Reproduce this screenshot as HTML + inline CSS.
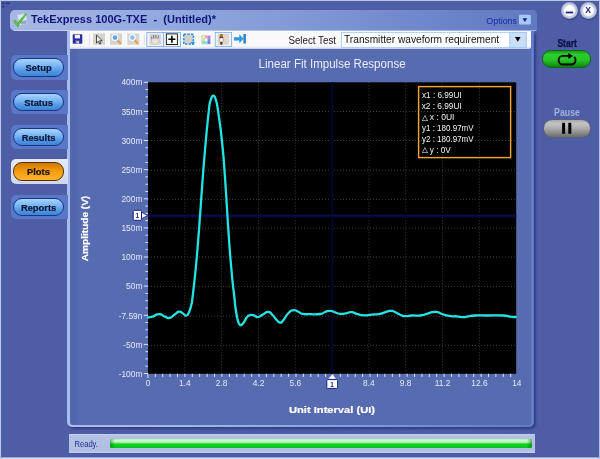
<!DOCTYPE html>
<html>
<head>
<meta charset="utf-8">
<title>TekExpress 100G-TXE - (Untitled)*</title>
<style>
html,body{margin:0;padding:0;}
body{width:600px;height:459px;overflow:hidden;background:#4e5ea6;font-family:"Liberation Sans",sans-serif;position:relative;}
.abs{position:absolute;}
#win{position:absolute;left:0;top:0;width:600px;height:459px;background:#4e5ea6;overflow:hidden;will-change:transform;}
#edgeT{left:0;top:0;width:600px;height:1.1px;background:#bcc5e8;}
#edgeL{left:0;top:0;width:1.3px;height:459px;background:linear-gradient(90deg,#d3d9f1,#a9b3df);}
#edgeR{left:598.5px;top:0;width:1.5px;height:459px;background:linear-gradient(90deg,#8f9bd0,#dfe4f6);}
#edgeB{left:0;top:457.3px;width:600px;height:1.7px;background:linear-gradient(180deg,#6f7dbf 0%,#cfd5ef 55%,#e3e7f7 100%);}
#titlebar{left:10px;top:10px;width:527px;height:21px;border-radius:5px 5px 0 5px;background:linear-gradient(90deg,#a6b8e5 0%,#92a8de 30%,#7d95d4 60%,#6a82c8 85%,#6079c1 100%);}
#titleline{left:14px;top:30px;width:522px;height:1px;background:linear-gradient(90deg,#c9d4f0,#aebfe9 60%,#9fb4e6);}
#toolbar{left:70px;top:31px;width:461px;height:17.6px;background:linear-gradient(180deg,#f9f9fa 0%,#f8f8f9 84%,#dfe4f3 94%,#b9c4e6 100%);border-radius:0 0 2px 0;}
#panel{left:67.4px;top:31px;width:467.1px;height:396px;border-radius:0 0 5px 5px;background:linear-gradient(90deg,#a9bdec 0%,#a3b8ea 25%,#8aa3df 55%,#6a87d0 85%,#607cc6 100%);box-shadow:2px 2px 2.5px #303e86;}
#panelin{left:70px;top:31px;width:461.2px;height:394.1px;border-radius:0 0 3px 3px;background:linear-gradient(90deg,#5367ac 0px,#5367ac 7px,#576bb0 8px,#576bb0 100%);}
#status{left:69.4px;top:434.1px;width:465.6px;height:18.9px;background:linear-gradient(180deg,#c4d1ef 0%,#b3c2e4 10%,#b1c0e2 88%,#c5d1ef 100%);}
#prog{left:110.4px;top:438.8px;width:422px;height:9.7px;border-radius:1.5px;background:linear-gradient(90deg,rgba(0,110,10,0.5) 0px,rgba(0,110,10,0) 5px,rgba(0,110,10,0) 417px,rgba(0,100,10,0.55) 422px),linear-gradient(180deg,#b0f0b0 0%,#cbfacb 14%,#b5f3b5 36%,#5fe26a 47%,#10d428 56%,#0ccc22 80%,#10b824 100%);}
.tab{position:absolute;left:11px;width:57px;height:24.3px;background:#5b77c7;border-radius:5px 0 0 5px;}
.tab.sel{background:linear-gradient(180deg,#e3e9f7 0%,#dbe2f3 50%,#cdd7ef 100%);left:10.8px;width:57.2px;}
.btn{position:absolute;left:2.2px;top:2.9px;width:50.8px;height:18.4px;box-sizing:border-box;border:1px solid #17348a;border-radius:9px;background:linear-gradient(180deg,#a8d4ff 0%,#79b6f4 40%,#4f93e0 75%,#3f84d4 100%);}
.tab.sel .btn{border-color:#5a3000;background:linear-gradient(180deg,#d07800 0%,#f39a0c 45%,#ffb52c 100%);}
.btn span{position:absolute;left:0;right:0;top:0;text-align:center;font-size:9.4px;font-weight:bold;color:#0a1638;line-height:17.5px;-webkit-text-stroke:0.2px #0a1638;}
.tab.sel .btn span{color:#1c0e00;}
.wbtn{position:absolute;width:17px;height:17px;border-radius:50%;background:radial-gradient(circle closest-side at 50% 50%,#ffffff 0%,#ffffff 56%,#d3d9ea 68%,#bcc5dd 82%,#aab4d2 93%,#8b96bd 100%);box-shadow:0.6px 1px 1.2px rgba(30,40,90,0.55);}
#startbtn{left:542.3px;top:49.7px;width:49.1px;height:18.8px;box-sizing:border-box;border:1px solid #0f6a12;border-radius:9.3px;background:linear-gradient(180deg,#1a9a1c 0%,#2ccc2e 22%,#27c629 55%,#179c19 85%,#0f8012 100%);}
#pausebtn{left:542.7px;top:119.2px;width:48.6px;height:18.5px;box-sizing:border-box;border:1px solid #5a5f78;border-radius:9.2px;background:linear-gradient(180deg,#a6a6a6 0%,#c4c4c4 20%,#acacac 50%,#888888 78%,#6c6c6c 100%);}
#ov{left:0;top:0;}
</style>
</head>
<body>
<div id="win">
  <div id="titlebar" class="abs"></div>
  <div id="titleline" class="abs"></div>
  <div id="panel" class="abs"></div>
  <div id="panelin" class="abs"></div>
  <div id="toolbar" class="abs"></div>

  <div class="tab" style="top:55.4px"><div class="btn"><span>Setup</span></div></div>
  <div class="tab" style="top:90.2px"><div class="btn"><span>Status</span></div></div>
  <div class="tab" style="top:125px"><div class="btn"><span>Results</span></div></div>
  <div class="tab sel" style="top:159.3px"><div class="btn"><span>Plots</span></div></div>
  <div class="tab" style="top:194.7px"><div class="btn"><span>Reports</span></div></div>

  <div class="wbtn" style="left:561px;top:2.1px"></div>
  <div class="wbtn" style="left:579.8px;top:2.1px"></div>
  <div id="startbtn" class="abs"></div>
  <div id="pausebtn" class="abs"></div>

  <div id="status" class="abs"></div>
  <div id="prog" class="abs"></div>
  <div id="edgeT" class="abs"></div><div id="edgeL" class="abs"></div><div id="edgeR" class="abs"></div><div id="edgeB" class="abs"></div>

  <svg id="ov" class="abs" width="600" height="459" viewBox="0 0 600 459" font-family="Liberation Sans, sans-serif">
    <!-- grip -->
    <g fill="#2b3784"><rect x="2" y="2.4" width="2.4" height="1.8"/><rect x="5.6" y="2.4" width="4" height="1.8"/><rect x="2" y="5.6" width="2.4" height="1.7"/></g>
    <!-- app icon -->
    <g>
      <path d="M17.2 14.8 L25.6 13.6 L27.6 23.6 L19.4 25.8 Z" fill="#e6ebf6" stroke="#b4bdd6" stroke-width="0.5" opacity="0.9"/>
      <path d="M20.6 21.6 L26.4 20 L27 23.2 L21.4 24.8 Z" fill="#8f9cb2" opacity="0.85"/>
      <path d="M13.1 21.6 L15 19.6 L17.3 22.8 L25.6 13 L27.2 13.8 L17.7 27.2 Z" fill="#46b536"/>
      <path d="M14.4 21.3 L17.4 25.2 L26 14" fill="none" stroke="#9be083" stroke-width="0.6" stroke-linecap="round" opacity="0.8"/>
    </g>
    <text x="31" y="23" font-size="10.3px" font-weight="bold" fill="#0f177a" xml:space="preserve" textLength="185" lengthAdjust="spacingAndGlyphs">TekExpress 100G-TXE  -  (Untitled)*</text>
    <text x="486.3" y="24" font-size="9.2px" fill="#1b2a9c" textLength="30.7" lengthAdjust="spacingAndGlyphs">Options</text>
    <rect x="519" y="14.8" width="11.8" height="9.7" rx="1" fill="#a7c7f7"/>
    <path d="M522.6 18.3 L527.2 18.3 L524.9 22 Z" fill="#0f1a78"/>
    <!-- window buttons -->
    <rect x="565.8" y="11.6" width="7.4" height="1.8" fill="#1a237e"/>
    <text x="588.2" y="13" font-size="8.6px" font-weight="bold" fill="#1a237e" text-anchor="middle">X</text>

    <!-- toolbar icons -->
    <g>
      <!-- save -->
      <rect x="72.7" y="34.3" width="9.6" height="9.4" rx="0.8" fill="#2b2f9d"/>
      <rect x="74.8" y="34.8" width="5.2" height="3.6" fill="#f4f6ff"/>
      <rect x="75.6" y="40.6" width="3.6" height="3.1" fill="#8f95d6"/>
      <rect x="77.6" y="41.1" width="1.2" height="2.2" fill="#f4f6ff"/>
      <rect x="89.2" y="33.6" width="0.8" height="11.4" fill="#d9d9d9"/>
      <!-- pointer -->
      <rect x="93" y="33.5" width="12" height="11.2" fill="#d6d3cc"/>
      <path d="M96.5 35 L96.5 43 L98.4 41.3 L99.8 44 L101 43.4 L99.7 40.8 L102.2 40.6 Z" fill="#f2f2f2" stroke="#222" stroke-width="0.8" stroke-linejoin="round"/>
      <!-- zoom in -->
      <rect x="110" y="33.5" width="12" height="11.2" fill="#d6d3cc"/>
      <line x1="116.7" y1="39.5" x2="120.3" y2="43.2" stroke="#e8a050" stroke-width="2.2" stroke-linecap="round"/>
      <circle cx="115" cy="37.6" r="2.9" fill="#5aa4e6" stroke="#f6fbff" stroke-width="1.2"/>
      <!-- zoom out -->
      <rect x="127.3" y="33.5" width="12" height="11.2" fill="#d6d3cc"/>
      <line x1="134" y1="39.5" x2="137.6" y2="43.2" stroke="#e8a050" stroke-width="2.2" stroke-linecap="round"/>
      <circle cx="132.3" cy="37.6" r="2.9" fill="#8cc0ee" stroke="#f6fbff" stroke-width="1.2"/>
      <rect x="143.8" y="33.6" width="0.8" height="11.4" fill="#d9d9d9"/>
      <!-- hand (selected) -->
      <rect x="146.8" y="32.5" width="16.6" height="14" fill="#eef4fc" stroke="#86b2ea" stroke-width="0.9"/>
      <rect x="149.5" y="33.8" width="11.5" height="11" fill="#dcd5cf"/>
      <path d="M152 39.5 L151.6 37 M153.8 38 L153.6 35.6 M155.8 37.8 L156 35.4 M157.8 38.3 L158.6 36.2" stroke="#5a6fa0" stroke-width="1" stroke-linecap="round" fill="none"/>
      <path d="M151.6 39.5 C152 38.5 158 38 159 39.5 C159.5 41.5 158 44 156.5 44.4 L153.6 44.4 C152.2 43.5 151.4 41.5 151.6 39.5 Z" fill="#f6e2d0" stroke="#9aa6c4" stroke-width="0.5"/>
      <!-- crosshair (selected) -->
      <rect x="163.6" y="32.5" width="16.9" height="14" fill="#eef4fc" stroke="#86b2ea" stroke-width="0.9"/>
      <rect x="166.4" y="33.9" width="11" height="10.6" fill="#ffffff" stroke="#222" stroke-width="1"/>
      <path d="M171.9 35.7 V42.7 M168.4 39.2 H175.4" stroke="#000" stroke-width="1.6" fill="none"/>
      <!-- marquee -->
      <rect x="184.3" y="34.8" width="8.6" height="8.6" fill="#d2d0cc"/>
      <rect x="183.8" y="34.3" width="9.6" height="9.6" fill="none" stroke="#2b8bd8" stroke-width="1.5" stroke-dasharray="2.4 1.2"/>
      <path d="M190.6 42 H195 L192.8 45.2 Z" fill="#2190e0"/>
      <!-- palette -->
      <rect x="201.2" y="35" width="9.8" height="9.6" rx="1" fill="#d9d6d2"/>
      <rect x="202.4" y="36" width="2.5" height="2.5" fill="#f6ef9c"/><rect x="205" y="36" width="2.5" height="2.5" fill="#f49ad0"/><rect x="207.6" y="36" width="2.5" height="2.5" fill="#d46ee0"/>
      <rect x="202.4" y="38.6" width="2.5" height="2.5" fill="#b6f2a0"/><rect x="205" y="38.6" width="2.5" height="2.5" fill="#ffffff"/><rect x="207.6" y="38.6" width="2.5" height="2.5" fill="#7c8cf0"/>
      <rect x="202.4" y="41.2" width="2.5" height="2.5" fill="#7fe0a0"/><rect x="205" y="41.2" width="2.5" height="2.5" fill="#9ad8f0"/><rect x="207.6" y="41.2" width="2.5" height="2.5" fill="#5a78e0"/>
      <!-- marker (selected) -->
      <rect x="215.2" y="32.5" width="16.4" height="14" fill="#eef4fc" stroke="#86b2ea" stroke-width="0.9"/>
      <rect x="217.6" y="33.8" width="11.4" height="11" fill="#e3d6cc"/>
      <rect x="219.8" y="34" width="3" height="3.2" fill="#b9771c"/>
      <rect x="219.4" y="36.8" width="3.8" height="1.4" fill="#3a2a20"/>
      <circle cx="221.3" cy="40" r="2.2" fill="#f4f0ea" stroke="#8a7a70" stroke-width="0.5"/>
      <rect x="220.2" y="42" width="2.2" height="2.6" fill="#4a342a"/>
      <!-- goto arrow -->
      <path d="M234 37.2 H239.3 V34.3 L243.6 38.8 L239.3 43.3 V40.4 H234 Z" fill="#2f97de"/>
      <rect x="243.4" y="34" width="2.5" height="9.5" fill="#2583cc"/>
    </g>
    <text x="288.4" y="43.5" font-size="10px" fill="#1c1c1c" textLength="47.6" lengthAdjust="spacingAndGlyphs">Select Test</text>
    <rect x="341.4" y="32.4" width="184.8" height="15" fill="#ffffff" stroke="#a9c9f1" stroke-width="0.9"/>
    <rect x="509.8" y="32.4" width="16.4" height="15" fill="#c9def9" stroke="#a3c5f0" stroke-width="0.9"/>
    <path d="M515 37 L520.6 37 L517.8 41.7 Z" fill="#000"/>
    <text x="344" y="43.4" font-size="10px" fill="#111" textLength="155.2" lengthAdjust="spacingAndGlyphs">Transmitter waveform requirement</text>

    <!-- right buttons -->
    <text x="557.4" y="46.8" font-size="10.2px" font-weight="bold" fill="#0a0f40" stroke="#0a0f40" stroke-width="0.25" textLength="19.5" lengthAdjust="spacingAndGlyphs">Start</text>
    <path d="M569 55.9 H562.9 A4.3 4.3 0 0 0 562.9 64.5 H571.5 A4.3 4.3 0 0 0 574.6 57.4" fill="none" stroke="#000" stroke-width="1.9" stroke-linecap="round"/>
    <path d="M568.4 52.9 L573 55.9 L568.4 58.9 Z" fill="#000"/>
    <text x="554" y="115.8" font-size="10.2px" font-weight="bold" fill="#a3b0d8" textLength="26" lengthAdjust="spacingAndGlyphs">Pause</text>
    <rect x="562.1" y="122.8" width="3" height="11" fill="#000"/>
    <rect x="568.3" y="122.8" width="3" height="11" fill="#000"/>

    <!-- status -->
    <text x="74.4" y="446.9" font-size="8.8px" fill="#1f2f96" textLength="23.6" lengthAdjust="spacingAndGlyphs">Ready.</text>

    <!-- chart -->
    <rect x="148" y="82.3" width="368.2" height="291.5" fill="#000"/>
    <g stroke="#8c8a84" stroke-width="1" stroke-dasharray="1 2" opacity="0.45"><line x1="184.8" y1="82.3" x2="184.8" y2="373.8"/><line x1="148" y1="111.5" x2="516.2" y2="111.5"/><line x1="221.6" y1="82.3" x2="221.6" y2="373.8"/><line x1="148" y1="140.5" x2="516.2" y2="140.5"/><line x1="258.5" y1="82.3" x2="258.5" y2="373.8"/><line x1="148" y1="170.2" x2="516.2" y2="170.2"/><line x1="295.3" y1="82.3" x2="295.3" y2="373.8"/><line x1="148" y1="199.3" x2="516.2" y2="199.3"/><line x1="332.1" y1="82.3" x2="332.1" y2="373.8"/><line x1="148" y1="228.2" x2="516.2" y2="228.2"/><line x1="368.9" y1="82.3" x2="368.9" y2="373.8"/><line x1="148" y1="257.0" x2="516.2" y2="257.0"/><line x1="405.7" y1="82.3" x2="405.7" y2="373.8"/><line x1="148" y1="286.4" x2="516.2" y2="286.4"/><line x1="442.6" y1="82.3" x2="442.6" y2="373.8"/><line x1="148" y1="316.2" x2="516.2" y2="316.2"/><line x1="479.4" y1="82.3" x2="479.4" y2="373.8"/><line x1="148" y1="345.4" x2="516.2" y2="345.4"/></g>
    <g stroke="#e2e7fb" stroke-width="1"><line x1="143.8" y1="82.3" x2="148" y2="82.3"/><line x1="145.4" y1="89.6" x2="148" y2="89.6"/><line x1="145.4" y1="96.9" x2="148" y2="96.9"/><line x1="145.4" y1="104.1" x2="148" y2="104.1"/><line x1="143.8" y1="111.4" x2="148" y2="111.4"/><line x1="145.4" y1="118.7" x2="148" y2="118.7"/><line x1="145.4" y1="126.0" x2="148" y2="126.0"/><line x1="145.4" y1="133.3" x2="148" y2="133.3"/><line x1="143.8" y1="140.5" x2="148" y2="140.5"/><line x1="145.4" y1="147.8" x2="148" y2="147.8"/><line x1="145.4" y1="155.1" x2="148" y2="155.1"/><line x1="145.4" y1="162.4" x2="148" y2="162.4"/><line x1="143.8" y1="169.7" x2="148" y2="169.7"/><line x1="145.4" y1="176.9" x2="148" y2="176.9"/><line x1="145.4" y1="184.2" x2="148" y2="184.2"/><line x1="145.4" y1="191.5" x2="148" y2="191.5"/><line x1="143.8" y1="198.8" x2="148" y2="198.8"/><line x1="145.4" y1="206.1" x2="148" y2="206.1"/><line x1="145.4" y1="213.3" x2="148" y2="213.3"/><line x1="145.4" y1="220.6" x2="148" y2="220.6"/><line x1="143.8" y1="227.9" x2="148" y2="227.9"/><line x1="145.4" y1="235.2" x2="148" y2="235.2"/><line x1="145.4" y1="242.5" x2="148" y2="242.5"/><line x1="145.4" y1="249.7" x2="148" y2="249.7"/><line x1="143.8" y1="257.0" x2="148" y2="257.0"/><line x1="145.4" y1="264.3" x2="148" y2="264.3"/><line x1="145.4" y1="271.6" x2="148" y2="271.6"/><line x1="145.4" y1="278.9" x2="148" y2="278.9"/><line x1="143.8" y1="286.1" x2="148" y2="286.1"/><line x1="145.4" y1="293.4" x2="148" y2="293.4"/><line x1="145.4" y1="300.7" x2="148" y2="300.7"/><line x1="145.4" y1="308.0" x2="148" y2="308.0"/><line x1="143.8" y1="315.3" x2="148" y2="315.3"/><line x1="145.4" y1="322.5" x2="148" y2="322.5"/><line x1="145.4" y1="329.8" x2="148" y2="329.8"/><line x1="145.4" y1="337.1" x2="148" y2="337.1"/><line x1="143.8" y1="344.4" x2="148" y2="344.4"/><line x1="145.4" y1="351.7" x2="148" y2="351.7"/><line x1="145.4" y1="358.9" x2="148" y2="358.9"/><line x1="145.4" y1="366.2" x2="148" y2="366.2"/><line x1="143.8" y1="373.5" x2="148" y2="373.5"/><line x1="147.9" y1="373.8" x2="147.9" y2="378.0"/><line x1="155.3" y1="373.8" x2="155.3" y2="376.90000000000003"/><line x1="162.7" y1="373.8" x2="162.7" y2="376.90000000000003"/><line x1="170.1" y1="373.8" x2="170.1" y2="376.90000000000003"/><line x1="177.5" y1="373.8" x2="177.5" y2="376.90000000000003"/><line x1="184.9" y1="373.8" x2="184.9" y2="376.90000000000003"/><line x1="192.3" y1="373.8" x2="192.3" y2="376.90000000000003"/><line x1="199.7" y1="373.8" x2="199.7" y2="376.90000000000003"/><line x1="207.1" y1="373.8" x2="207.1" y2="376.90000000000003"/><line x1="214.5" y1="373.8" x2="214.5" y2="376.90000000000003"/><line x1="221.9" y1="373.8" x2="221.9" y2="376.90000000000003"/><line x1="229.4" y1="373.8" x2="229.4" y2="376.90000000000003"/><line x1="236.8" y1="373.8" x2="236.8" y2="376.90000000000003"/><line x1="244.2" y1="373.8" x2="244.2" y2="376.90000000000003"/><line x1="251.6" y1="373.8" x2="251.6" y2="376.90000000000003"/><line x1="259.0" y1="373.8" x2="259.0" y2="376.90000000000003"/><line x1="266.4" y1="373.8" x2="266.4" y2="376.90000000000003"/><line x1="273.8" y1="373.8" x2="273.8" y2="376.90000000000003"/><line x1="281.2" y1="373.8" x2="281.2" y2="376.90000000000003"/><line x1="288.6" y1="373.8" x2="288.6" y2="376.90000000000003"/><line x1="296.0" y1="373.8" x2="296.0" y2="376.90000000000003"/><line x1="303.4" y1="373.8" x2="303.4" y2="376.90000000000003"/><line x1="310.8" y1="373.8" x2="310.8" y2="376.90000000000003"/><line x1="318.2" y1="373.8" x2="318.2" y2="376.90000000000003"/><line x1="325.6" y1="373.8" x2="325.6" y2="376.90000000000003"/><line x1="333.0" y1="373.8" x2="333.0" y2="376.90000000000003"/><line x1="340.4" y1="373.8" x2="340.4" y2="376.90000000000003"/><line x1="347.8" y1="373.8" x2="347.8" y2="376.90000000000003"/><line x1="355.2" y1="373.8" x2="355.2" y2="376.90000000000003"/><line x1="362.6" y1="373.8" x2="362.6" y2="376.90000000000003"/><line x1="370.1" y1="373.8" x2="370.1" y2="376.90000000000003"/><line x1="377.5" y1="373.8" x2="377.5" y2="376.90000000000003"/><line x1="384.9" y1="373.8" x2="384.9" y2="376.90000000000003"/><line x1="392.3" y1="373.8" x2="392.3" y2="376.90000000000003"/><line x1="399.7" y1="373.8" x2="399.7" y2="376.90000000000003"/><line x1="407.1" y1="373.8" x2="407.1" y2="376.90000000000003"/><line x1="414.5" y1="373.8" x2="414.5" y2="376.90000000000003"/><line x1="421.9" y1="373.8" x2="421.9" y2="376.90000000000003"/><line x1="429.3" y1="373.8" x2="429.3" y2="376.90000000000003"/><line x1="436.7" y1="373.8" x2="436.7" y2="376.90000000000003"/><line x1="444.1" y1="373.8" x2="444.1" y2="376.90000000000003"/><line x1="451.5" y1="373.8" x2="451.5" y2="376.90000000000003"/><line x1="458.9" y1="373.8" x2="458.9" y2="376.90000000000003"/><line x1="466.3" y1="373.8" x2="466.3" y2="376.90000000000003"/><line x1="473.7" y1="373.8" x2="473.7" y2="376.90000000000003"/><line x1="481.1" y1="373.8" x2="481.1" y2="376.90000000000003"/><line x1="488.5" y1="373.8" x2="488.5" y2="376.90000000000003"/><line x1="495.9" y1="373.8" x2="495.9" y2="376.90000000000003"/><line x1="503.3" y1="373.8" x2="503.3" y2="376.90000000000003"/><line x1="510.7" y1="373.8" x2="510.7" y2="376.90000000000003"/></g>
    <g fill="#e4e9fb" font-size="8.4px"><text x="142.4" y="85.3" text-anchor="end">400m</text><text x="142.4" y="114.5" text-anchor="end">350m</text><text x="142.4" y="143.5" text-anchor="end">300m</text><text x="142.4" y="173.2" text-anchor="end">250m</text><text x="142.4" y="202.3" text-anchor="end">200m</text><text x="142.4" y="231.2" text-anchor="end">150m</text><text x="142.4" y="260.0" text-anchor="end">100m</text><text x="142.4" y="289.4" text-anchor="end">50m</text><text x="142.4" y="319.2" text-anchor="end">-7.59n</text><text x="142.4" y="348.4" text-anchor="end">-50m</text><text x="142.4" y="376.8" text-anchor="end">-100m</text><text x="148.0" y="386.0" text-anchor="middle">0</text><text x="184.8" y="386.0" text-anchor="middle">1.4</text><text x="221.6" y="386.0" text-anchor="middle">2.8</text><text x="258.5" y="386.0" text-anchor="middle">4.2</text><text x="295.3" y="386.0" text-anchor="middle">5.6</text><text x="368.9" y="386.0" text-anchor="middle">8.4</text><text x="405.7" y="386.0" text-anchor="middle">9.8</text><text x="442.6" y="386.0" text-anchor="middle">11.2</text><text x="479.4" y="386.0" text-anchor="middle">12.6</text><text x="516.8" y="386.0" text-anchor="middle">14</text></g>
    <line x1="332.4" y1="82.3" x2="332.4" y2="373.8" stroke="#020316" stroke-width="2.6"/><line x1="332.4" y1="82.3" x2="332.4" y2="373.8" stroke="#060734" stroke-width="1.1"/>
    <line x1="148" y1="215.8" x2="516.2" y2="215.8" stroke="#040524" stroke-width="3.8"/><line x1="148" y1="215.8" x2="516.2" y2="215.8" stroke="#0a0b50" stroke-width="1.5"/>
    <path d="M148.0,317.5 C149.5,317.2 148.8,317.8 152.5,316.7 C156.2,315.6 155.0,314.2 159.2,314.2 C163.4,314.2 161.5,315.5 165.0,316.7 C168.5,317.9 166.4,318.6 169.7,317.8 C173.0,317.0 171.8,316.2 175.0,314.2 C178.2,312.2 176.4,311.9 179.2,311.7 C182.0,311.5 180.9,312.4 183.3,313.7 C185.7,315.0 184.3,316.2 186.3,315.5 C188.3,314.8 187.4,315.8 189.2,311.7 C191.0,307.6 190.7,307.2 191.7,303.3 C192.7,299.4 191.4,306.4 192.2,300.0 C193.0,293.6 192.9,294.7 194.1,284.0 C195.3,273.3 194.7,278.7 195.8,268.0 C196.8,257.3 196.3,262.7 197.2,252.0 C198.1,241.3 197.7,246.7 198.5,236.0 C199.4,225.3 198.9,230.7 199.7,220.0 C200.5,209.3 200.1,214.7 200.9,204.0 C201.6,193.3 201.2,198.7 202.0,188.0 C202.8,177.3 202.4,182.7 203.2,172.0 C204.0,161.3 203.6,166.7 204.5,156.0 C205.4,145.3 204.9,150.7 205.9,140.0 C206.9,129.3 206.3,134.7 207.4,124.0 C208.5,113.3 208.5,114.2 209.1,108.0 C209.8,101.8 209.1,107.4 209.4,105.4 C209.7,103.4 209.5,104.2 210.1,101.9 C210.7,99.6 210.5,100.3 211.2,98.5 C211.9,96.7 211.5,97.4 212.2,96.4 C212.9,95.4 212.6,95.6 213.3,95.6 C214.0,95.6 213.7,95.4 214.4,96.4 C215.1,97.4 214.7,96.7 215.4,98.5 C216.1,100.3 215.9,99.6 216.5,101.9 C217.1,104.2 216.8,103.4 217.2,105.4 C217.5,107.4 216.6,101.8 217.6,108.0 C218.5,114.2 218.5,113.3 219.9,124.0 C221.4,134.7 220.7,129.3 221.8,140.0 C223.0,150.7 222.4,145.3 223.4,156.0 C224.3,166.7 223.8,161.3 224.6,172.0 C225.4,182.7 225.0,177.3 225.7,188.0 C226.4,198.7 226.1,193.3 226.7,204.0 C227.4,214.7 227.0,209.3 227.7,220.0 C228.4,230.7 228.0,225.3 228.8,236.0 C229.5,246.7 229.1,241.3 229.9,252.0 C230.8,262.7 230.3,257.3 231.3,268.0 C232.3,278.7 231.7,273.3 232.8,284.0 C234.0,294.7 233.9,292.8 234.7,300.0 C235.4,307.2 234.5,300.2 235.2,305.5 C235.9,310.8 235.8,310.6 236.8,315.9 C237.8,321.2 237.3,318.6 238.1,321.3 C238.9,324.0 238.4,322.7 239.3,324.0 C240.2,325.3 239.7,325.0 240.7,325.1 C241.7,325.2 241.0,325.6 242.3,324.3 C243.6,323.0 243.1,323.4 244.6,321.1 C246.1,318.8 245.2,319.3 246.8,317.4 C248.4,315.5 247.7,316.1 249.4,315.3 C251.1,314.5 250.1,314.8 252.0,315.0 C253.9,315.2 252.9,315.2 255.0,315.9 C257.1,316.6 255.5,317.6 258.3,317.0 C261.1,316.4 260.0,315.9 263.3,314.2 C266.6,312.5 265.2,311.7 268.3,312.0 C271.4,312.3 269.7,312.3 272.5,315.0 C275.3,317.7 274.2,317.5 276.7,320.0 C279.2,322.5 277.8,322.4 280.0,322.5 C282.2,322.6 280.5,323.4 283.3,320.3 C286.1,317.2 285.0,316.6 288.3,313.3 C291.6,310.0 290.0,310.8 293.3,310.3 C296.6,309.8 295.2,310.5 298.3,311.7 C301.4,312.9 298.6,313.0 302.5,313.8 C306.4,314.6 304.2,314.1 310.0,314.2 C315.8,314.3 315.0,314.7 320.0,314.0 C325.0,313.3 321.8,313.1 325.0,312.0 C328.2,310.9 326.6,310.8 329.7,310.8 C332.8,310.8 330.8,311.0 334.2,312.0 C337.6,313.0 336.1,313.4 340.0,313.8 C343.9,314.2 341.9,313.8 345.8,313.3 C349.7,312.8 347.8,311.9 351.7,312.2 C355.6,312.5 353.3,313.2 357.5,314.2 C361.7,315.2 359.5,315.1 364.2,315.3 C368.9,315.5 366.4,315.2 371.7,314.7 C377.0,314.2 375.0,314.8 380.0,313.8 C385.0,312.8 383.1,312.7 386.7,311.7 C390.3,310.7 388.0,310.7 390.8,310.8 C393.6,310.9 391.7,310.6 395.0,312.0 C398.3,313.4 397.2,313.6 400.8,315.0 C404.4,316.4 402.2,316.0 405.8,316.2 C409.4,316.4 407.0,315.7 411.7,315.5 C416.4,315.3 415.0,316.1 420.0,315.5 C425.0,314.9 422.5,314.9 426.7,313.8 C430.9,312.7 428.9,312.7 432.5,312.2 C436.1,311.7 433.9,311.4 437.5,312.2 C441.1,313.0 438.9,313.2 443.3,314.5 C447.7,315.8 446.3,315.6 450.8,316.2 C455.3,316.8 452.5,316.0 456.7,316.3 C460.9,316.6 459.4,317.2 463.3,317.2 C467.2,317.2 464.4,316.9 468.3,316.3 C472.2,315.7 468.9,315.8 475.0,315.5 C481.1,315.2 477.3,315.5 486.7,315.5 C496.1,315.5 495.5,315.1 503.3,315.5 C511.1,315.9 505.8,316.2 510.0,316.7 C514.2,317.2 513.9,316.9 515.8,317.0" fill="none" stroke="#24e3e3" stroke-width="2.3" stroke-linejoin="round" stroke-linecap="round"/>
    <!-- cursor markers -->
    <g>
      <path d="M141.6 212.2 L147.5 215.5 L141.6 218.8 Z" fill="#ffffff" stroke="#1a2280" stroke-width="0.8" stroke-linejoin="round"/>
      <rect x="133.2" y="210.3" width="8.3" height="10" rx="1" fill="#ffffff" stroke="#1a2280" stroke-width="1"/>
      <text x="137.3" y="217.7" font-size="6.4px" font-weight="bold" fill="#1a2280" text-anchor="middle">1</text>
      <path d="M332.2 374.2 L336.4 379 H328 Z" fill="#ffffff" stroke="#5a6cb0" stroke-width="0.4" stroke-linejoin="round"/>
      <rect x="326.8" y="379.6" width="10.8" height="8.8" rx="0.8" fill="#ffffff" stroke="#1a2280" stroke-width="1"/>
      <text x="332" y="386.6" font-size="6.4px" font-weight="bold" fill="#1a2280" text-anchor="middle">1</text>
    </g>
    <text x="258.6" y="68" fill="#e8edff" font-size="12.3px" textLength="147" lengthAdjust="spacingAndGlyphs">Linear Fit Impulse Response</text>
    <text x="289" y="412.6" fill="#ffffff" font-size="9.8px" font-weight="bold" stroke="#ffffff" stroke-width="0.2" textLength="86" lengthAdjust="spacingAndGlyphs">Unit Interval (UI)</text>
    <text transform="translate(88.3,261.2) rotate(-90)" fill="#ffffff" font-size="9.8px" font-weight="bold" stroke="#ffffff" stroke-width="0.2" textLength="65.4" lengthAdjust="spacingAndGlyphs">Amplitude (V)</text>
    <rect x="418.6" y="86.6" width="92" height="71" fill="none" stroke="#f4a434" stroke-width="1.45"/>
    <g fill="#f4f4f4" font-size="8.7px" lengthAdjust="spacingAndGlyphs">
      <text x="422" y="98.3" textLength="39.6" lengthAdjust="spacingAndGlyphs">x1 : 6.99UI</text>
      <text x="421.7" y="109.2" textLength="40" lengthAdjust="spacingAndGlyphs">x2 : 6.99UI</text>
      <text y="120.1"><tspan x="421.9" dy="-0.5" font-family="DejaVu Sans, Liberation Sans, sans-serif" font-size="7.7px">△</tspan><tspan x="429.8" dy="0.5" textLength="24.6" lengthAdjust="spacingAndGlyphs">x : 0UI</tspan></text>
      <text x="422" y="131" textLength="51.6" lengthAdjust="spacingAndGlyphs">y1 : 180.97mV</text>
      <text x="422" y="141.9" textLength="51.6" lengthAdjust="spacingAndGlyphs">y2 : 180.97mV</text>
      <text y="152.8"><tspan x="421.9" dy="-0.5" font-family="DejaVu Sans, Liberation Sans, sans-serif" font-size="7.7px">△</tspan><tspan x="429.8" dy="0.5" textLength="20.9" lengthAdjust="spacingAndGlyphs">y : 0V</tspan></text>
    </g>
  </svg>
</div>
</body>
</html>
